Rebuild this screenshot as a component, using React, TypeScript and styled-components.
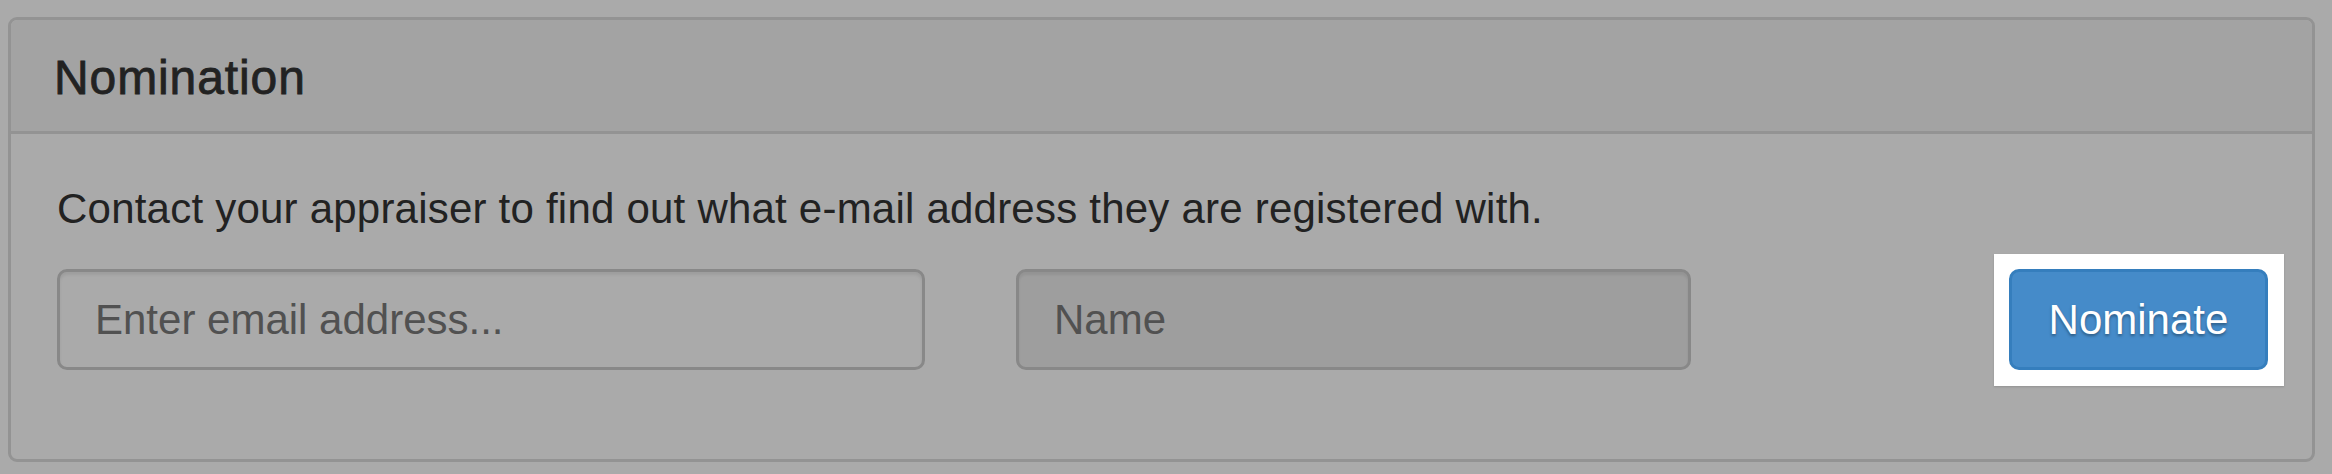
import styled, { createGlobalStyle } from "styled-components";

const GlobalStyle = createGlobalStyle`
  html, body {
    margin: 0;
    background: #ffffff;
  }

  body {
    font-family: "Liberation Sans", Arial, Helvetica, sans-serif;
    color: #333333;
  }

  * {
    box-sizing: border-box;
  }
`;

const Page = styled.div`
  min-height: 100vh;
  padding: 17px 17px 12px 8px;
`;

const Panel = styled.section`
  background: #ffffff;
  border: 3px solid #dddddd;
  border-radius: 9px;
`;

const PanelHeading = styled.header`
  background: #f5f5f5;
  border-bottom: 3px solid #dddddd;
  border-radius: 6px 6px 0 0;
  padding: 31px 43px 27px;
`;

const PanelTitle = styled.h3`
  margin: 0;
  font-size: 48px;
  line-height: 53px;
  font-weight: 400;
  letter-spacing: 0.9px;
  color: #333333;
  -webkit-text-stroke: 0.8px #333333;
`;

const PanelBody = styled.div`
  padding: 45px 44px 89px 46px;
`;

const Lead = styled.p`
  margin: 0 0 30px;
  font-size: 42px;
  line-height: 60px;
  letter-spacing: 0.22px;
  color: #333333;
`;

const FormRow = styled.form`
  display: flex;
  align-items: center;
  gap: 91px;
`;

const TextInput = styled.input<{ $width: number }>`
  width: ${(p) => p.$width}px;
  height: 101px;
  padding: 0 30px 0 35px;
  border: 3px solid #cccccc;
  border-radius: 10px;
  background: ${(p) => (p.readOnly ? "#eeeeee" : "#ffffff")};
  box-shadow: inset 0 3px 3px rgba(0, 0, 0, 0.075);
  font-family: inherit;
  font-size: 42px;
  color: #555555;
  outline: none;

  &::placeholder {
    color: #7a7a7a;
    opacity: 1;
  }
`;

const Spacer = styled.div`
  flex: 1;
`;

const Spotlight = styled.div`
  position: relative;
  z-index: 1001;
  margin: -15px -16px -16px -15px;
  padding: 15px 16px 16px 15px;
  background: #ffffff;
  box-shadow: 0 1px 2px rgba(0, 0, 0, 0.15);
`;

const PrimaryButton = styled.button`
  display: block;
  width: 259px;
  height: 101px;
  border: 3px solid #357ebd;
  border-radius: 10px;
  background: #458bc9;
  color: #ffffff;
  font-family: inherit;
  font-size: 42px;
  text-shadow: 0 2px 3px rgba(0, 0, 0, 0.35);
  cursor: pointer;
`;

const Overlay = styled.div`
  position: fixed;
  inset: 0;
  z-index: 1000;
  background: rgba(0, 0, 0, 0.333);
`;

const App = () => {
  return (
    <>
      <GlobalStyle />
      <Page>
        <Panel>
          <PanelHeading>
            <PanelTitle>Nomination</PanelTitle>
          </PanelHeading>
          <PanelBody>
            <Lead>
              Contact your appraiser to find out what e-mail address they are
              registered with.
            </Lead>
            <FormRow onSubmit={(e) => e.preventDefault()}>
              <TextInput
                type="email"
                placeholder="Enter email address..."
                $width={868}
              />
              <TextInput type="text" placeholder="Name" readOnly $width={675} />
              <Spacer />
              <Spotlight>
                <PrimaryButton type="submit">Nominate</PrimaryButton>
              </Spotlight>
            </FormRow>
          </PanelBody>
        </Panel>
      </Page>
      <Overlay />
    </>
  );
};

export default App;
